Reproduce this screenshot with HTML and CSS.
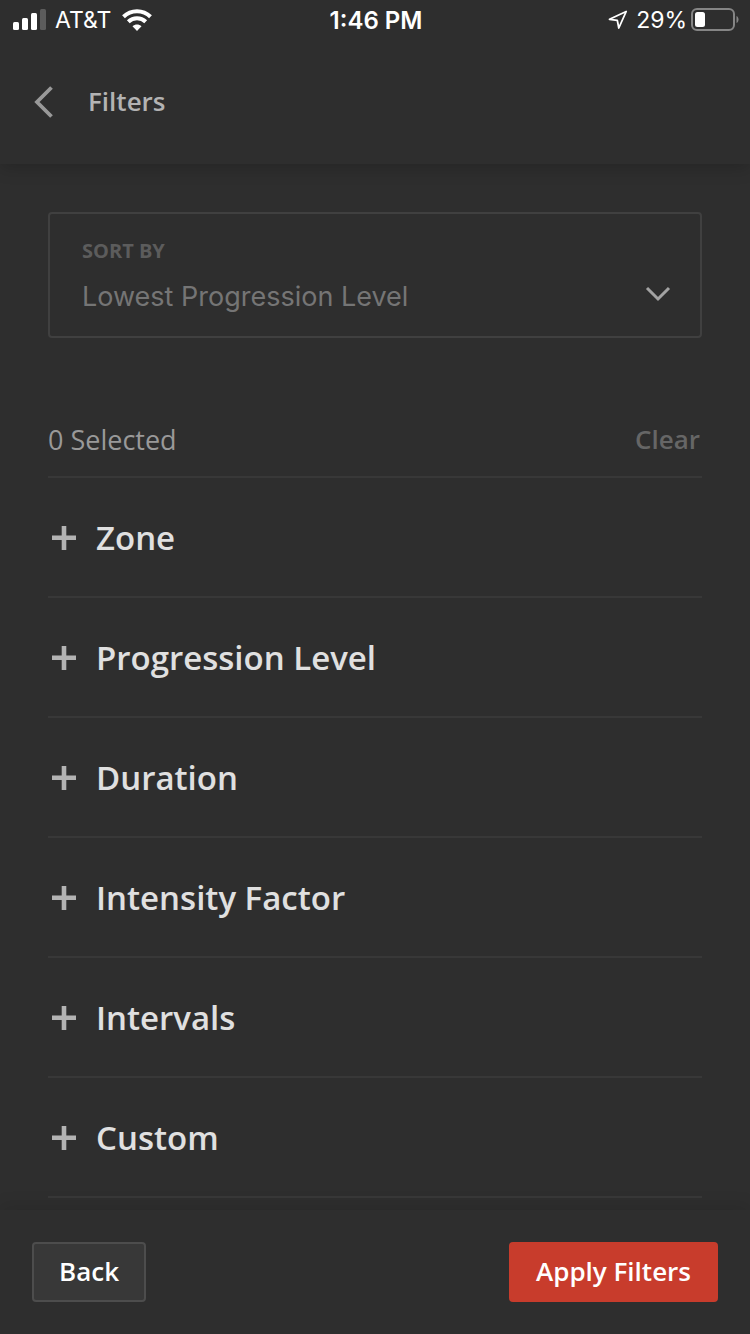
FILE: index.html
```html
<!DOCTYPE html>
<html lang="en">
<head>
<meta charset="utf-8">
<meta name="viewport" content="width=device-width, initial-scale=1">
<title>Filters</title>
<link rel="stylesheet" href="styles.css">
</head>
<body>
<div class="screen">
  <header class="header">
    <div class="status">
      <div class="status-side">
        <svg width="34" height="22" viewBox="0 0 34 22" fill="#fff" aria-hidden="true"><rect x="0" y="13" width="6" height="8" rx="1.5"/><rect x="9" y="9" width="6" height="12" rx="1.5"/><rect x="18" y="4" width="6" height="17" rx="1.5"/><rect x="27" y="0" width="6" height="21" rx="1.5" fill="#5c5c5c"/></svg>
        <span class="carrier">AT&amp;T</span>
        <svg width="30" height="22" viewBox="0 0 30 22" aria-hidden="true"><g fill="none" stroke="#fff" stroke-width="4"><path d="M1.500 7.700C9 .4 21 .4 28.500 7.700"/><path d="M6.300 12.800C11.200 8.100 18.800 8.100 23.700 12.800"/></g><path d="M10.500 17.300C13 14.900 17 14.900 19.500 17.300L15 22Z" fill="#fff"/></svg>
      </div>
      <time class="clock">1:46 PM</time>
      <div class="status-side status-end">
        <svg width="20" height="20" viewBox="0 0 20 20" fill="none" stroke="#fff" stroke-width="1.800" stroke-linejoin="round" aria-hidden="true"><path d="M18.200 1.500 1.500 9.300 9.300 10.300 10.800 18Z"/></svg>
        <span class="charge">29%</span>
        <svg width="48" height="24" viewBox="0 0 48 24" aria-hidden="true"><rect x="1" y="1" width="42" height="21" rx="5" fill="none" stroke="#858585" stroke-width="2"/><rect x="4" y="4" width="10" height="15" rx="2.500" fill="#fff"/><path d="M45.500 8C48.200 9 48.200 14 45.500 15Z" fill="#858585"/></svg>
      </div>
    </div>
    <div class="title-bar">
      <button class="icon-button" type="button" aria-label="Go back"><svg width="20" height="32" viewBox="0 0 20 32" fill="none" stroke="#999" stroke-width="3.800" aria-hidden="true"><path d="M17.500 1.500 3 16 17.500 30.500"/></svg></button>
      <h1 class="title">Filters</h1>
    </div>
  </header>
  <main class="content">
    <div class="sort">
      <label class="sort-label" for="sort">SORT BY</label>
      <select class="sort-select" id="sort"><option>Lowest Progression Level</option></select>
      <svg class="sort-arrow" width="26" height="16" viewBox="0 0 26 16" fill="none" stroke="#a3a3a3" stroke-width="3" aria-hidden="true"><path d="M2 2 13 13 24 2"/></svg>
    </div>
    <div class="summary">
      <span class="count">0 Selected</span>
      <button class="clear" type="button">Clear</button>
    </div>
    <div class="filters">
      <button class="filter" type="button" aria-expanded="false"><svg class="plus" width="24" height="26" viewBox="0 0 24 26" aria-hidden="true"><path d="M0 11.500h24v4.500H0zM9.700 2h4.600v24H9.700z"/></svg>Zone</button>
      <button class="filter" type="button" aria-expanded="false"><svg class="plus" width="24" height="26" viewBox="0 0 24 26" aria-hidden="true"><path d="M0 11.500h24v4.500H0zM9.700 2h4.600v24H9.700z"/></svg>Progression Level</button>
      <button class="filter" type="button" aria-expanded="false"><svg class="plus" width="24" height="26" viewBox="0 0 24 26" aria-hidden="true"><path d="M0 11.500h24v4.500H0zM9.700 2h4.600v24H9.700z"/></svg>Duration</button>
      <button class="filter" type="button" aria-expanded="false"><svg class="plus" width="24" height="26" viewBox="0 0 24 26" aria-hidden="true"><path d="M0 11.500h24v4.500H0zM9.700 2h4.600v24H9.700z"/></svg>Intensity Factor</button>
      <button class="filter" type="button" aria-expanded="false"><svg class="plus" width="24" height="26" viewBox="0 0 24 26" aria-hidden="true"><path d="M0 11.500h24v4.500H0zM9.700 2h4.600v24H9.700z"/></svg>Intervals</button>
      <button class="filter" type="button" aria-expanded="false"><svg class="plus" width="24" height="26" viewBox="0 0 24 26" aria-hidden="true"><path d="M0 11.500h24v4.500H0zM9.700 2h4.600v24H9.700z"/></svg>Custom</button>
    </div>
  </main>
  <footer class="footer">
    <button class="button" type="button">Back</button>
    <button class="button button-primary" type="button">Apply Filters</button>
  </footer>
</div>
</body>
</html>
```
FILE: styles.css
```css
* {
  box-sizing: border-box;
}

body {
  margin: 0;
  background: #2e2e2e;
  color: #e0e0e0;
  font-family: "Open Sans", sans-serif;
}

button,
select {
  margin: 0;
  padding: 0;
  border: 0;
  background: none;
  color: inherit;
  font: inherit;
}

svg {
  display: block;
  flex: none;
}

.screen {
  display: flex;
  flex-direction: column;
  min-height: 100vh;
}

.header {
  background: #2e2e2e;
  box-shadow: 0 4px 16px rgba(0, 0, 0, 0.18);
}

.status {
  display: grid;
  grid-template-columns: 1fr auto 1fr;
  align-items: center;
  height: 40px;
  padding: 0 11px 0 13px;
  color: #fff;
  font-family: Inter, sans-serif;
  font-size: 23px;
}

.status-side {
  display: flex;
  align-items: center;
  gap: 8px;
}

.carrier {
  margin-right: 3px;
}

.status-end {
  justify-content: flex-end;
}

.charge {
  margin-right: -4px;
}

.clock {
  font-size: 24px;
  font-weight: 600;
}

.title-bar {
  display: flex;
  align-items: center;
  gap: 34px;
  height: 124px;
  padding: 0 34px;
}

.icon-button {
  display: block;
}

.title {
  margin: 0;
  padding-bottom: 2px;
  color: #b3b3b3;
  font-size: 26px;
  font-weight: 600;
  line-height: 32px;
}

.content {
  flex: 1;
  padding: 48px 48px 12px;
}

.sort {
  position: relative;
  display: flex;
  flex-direction: column;
  gap: 12px;
  padding: 24px 32px 20px;
  border: 2px solid #404040;
  border-radius: 4px;
}

.sort-label {
  color: #5c5c5c;
  font-size: 20px;
  font-weight: 700;
  line-height: 26px;
}

.sort-select {
  width: 100%;
  height: 40px;
  appearance: none;
  color: #757575;
  font-family: Inter, sans-serif;
  font-size: 27px;
}

.sort-arrow {
  position: absolute;
  right: 29px;
  bottom: 34px;
  pointer-events: none;
}

.summary {
  display: flex;
  align-items: center;
  justify-content: space-between;
  margin-top: 64px;
  height: 76px;
  padding: 0 2px 0 0;
  border-bottom: 2px solid #383838;
}

.count {
  color: #999;
  font-size: 27px;
}

.clear {
  color: #666;
  font-size: 26px;
  font-weight: 600;
}

.filters {
  display: flex;
  flex-direction: column;
}

.filter {
  display: flex;
  align-items: center;
  gap: 20px;
  height: 120px;
  padding: 0 4px;
  border-bottom: 2px solid #383838;
  font-size: 33px;
  font-weight: 600;
}

.plus {
  fill: #b3b3b3;
}

.footer {
  position: sticky;
  bottom: 0;
  display: flex;
  align-items: center;
  justify-content: space-between;
  height: 124px;
  padding: 0 32px;
  background: #2e2e2e;
  box-shadow: 0 -4px 16px rgba(0, 0, 0, 0.1);
}

.button {
  height: 60px;
  padding: 0 25px 2px;
  border: 2px solid #4d4d4d;
  border-radius: 4px;
  background: #383838;
  color: #fff;
  font-size: 26px;
  font-weight: 600;
}

.button-primary {
  border-color: #c83c2c;
  background: #c83c2c;
}
```
